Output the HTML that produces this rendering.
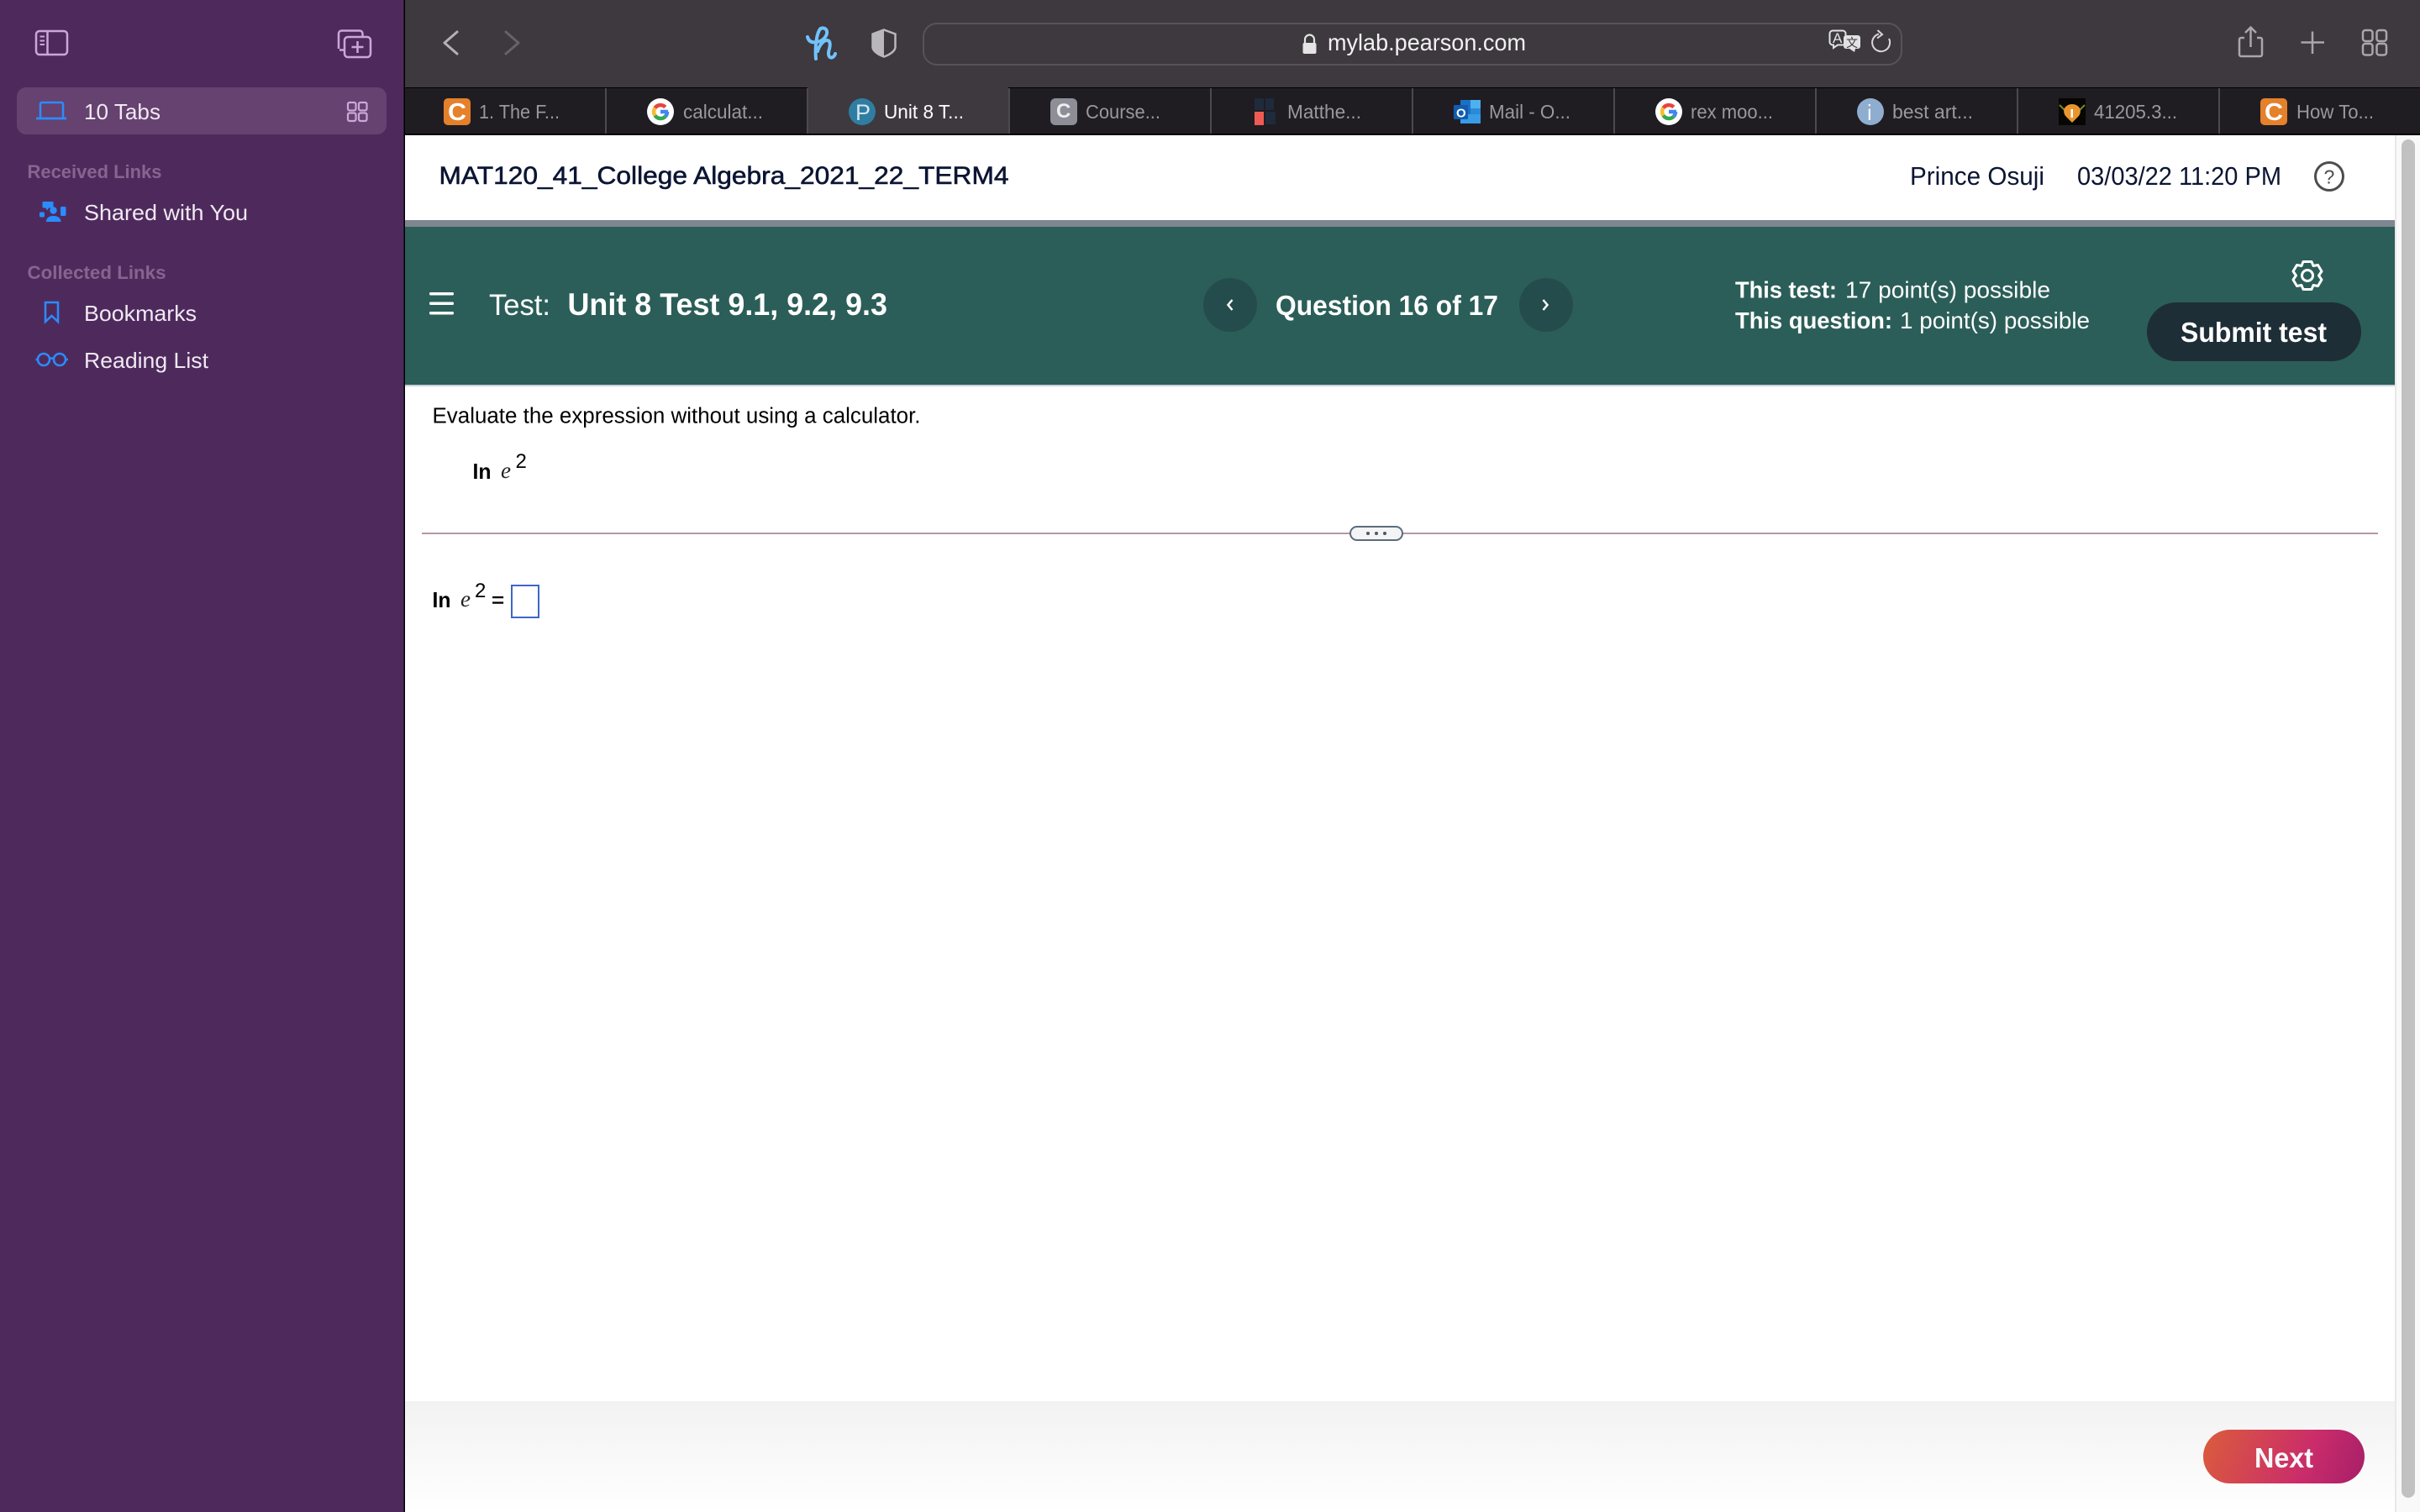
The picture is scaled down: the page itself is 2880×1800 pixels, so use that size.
<!DOCTYPE html>
<html lang="en">
<head>
<meta charset="utf-8">
<title>mylab.pearson.com</title>
<style>
html,body{margin:0;padding:0;width:2880px;height:1800px;overflow:hidden;background:#fff}
svg{display:block}
text{font-family:"Liberation Sans",Arial,sans-serif}
.side{font-size:26px;fill:#f0e9f2}
.head{font-size:22px;font-weight:bold;fill:#85658f}
.tab{font-size:23px;fill:#9a989d}
.ic{fill:none;stroke:#c9a8d8;stroke-width:2.5}
.bl{fill:none;stroke:#2b8cff;stroke-width:2.5}
.tb{fill:none;stroke:#a9a6ac;stroke-width:2.5}
.w{fill:#fff}
.d{fill:#0b1533}
.m{fill:#000}
</style>
</head>
<body>
<svg width="2880" height="1800" viewBox="0 0 2880 1800" xmlns="http://www.w3.org/2000/svg">
<defs>
  <g id="gg">
    <circle cx="16" cy="16" r="16" fill="#fff"/>
    <g fill="none" stroke-width="4.5">
      <path d="M9.5 11.5A8 8 0 0 1 21.8 10.5" stroke="#e8453c"/>
      <path d="M9.5 11.5A8 8 0 0 0 9.5 20.5" stroke="#f9bb2d"/>
      <path d="M9.5 20.5A8 8 0 0 0 22 21.5" stroke="#34a853"/>
      <path d="M25 16H16M24 16A8 8 0 0 1 22 21.5" stroke="#4285f4"/>
    </g>
  </g>
</defs>

<!-- sidebar -->
<rect x="0" y="0" width="480.5" height="1800" fill="#4e2a5c"/>
<rect x="480.5" y="0" width="1.5" height="1800" fill="#000"/>
<rect x="20" y="104" width="440" height="56" rx="11" fill="#664270"/>

<g class="ic">
  <rect x="43" y="37" width="37" height="28" rx="4"/>
  <path d="M56.5 37V65"/>
  <path d="M47.5 43.5H53M47.5 48.5H53M47.5 53H53" stroke-width="2"/>
  <path d="M403 58V40a3.500 3.500 0 0 1 3.500-3.500H428a3.500 3.500 0 0 1 3.500 3.500v4"/>
  <path d="M404 59.500H410"/>
  <rect x="410" y="44" width="31" height="24" rx="4"/>
  <path d="M425.5 49V63M418.5 56H432.5"/>
  <g stroke-width="2.2">
    <rect x="414" y="122" width="9.5" height="9.5" rx="2"/>
    <rect x="427" y="122" width="9.5" height="9.5" rx="2"/>
    <rect x="414" y="134.500" width="9.5" height="9.500" rx="2"/>
    <rect x="427" y="134.500" width="9.500" height="9.500" rx="2"/>
  </g>
</g>

<g class="bl">
  <path d="M48 140V124a2 2 0 0 1 2-2H73a2 2 0 0 1 2 2V140"/>
  <path d="M43 141H79" stroke-width="2.800"/>
  <path d="M54 360H69V383L61.500 376L54 383Z"/>
  <circle cx="52" cy="428" r="7"/>
  <circle cx="71" cy="428" r="7"/>
  <path d="M59 427.500C61 426 62 426 64 427.500M42.500 428H45M78 428H81"/>
</g>
<g fill="#2b8cff">
  <path d="M52 240H62a1.500 1.500 0 0 1 1.500 1.500V246a1.500 1.500 0 0 1-1.500 1.500H58L56 250.500L54.500 247.500H52a1.500 1.500 0 0 1-1.500-1.500V241.500A1.500 1.500 0 0 1 52 240Z"/>
  <circle cx="63.500" cy="250.500" r="4.200"/>
  <path d="M55 264C55 259 59 257 63.500 257S72.500 259 72.500 264Z"/>
  <rect x="72" y="246" width="6.500" height="11" rx="1.500"/>
  <rect x="47" y="252.500" width="6" height="6" rx="1.500"/>
</g>

<text class="side" x="100" y="142" textLength="91" lengthAdjust="spacingAndGlyphs">10 Tabs</text>
<text class="head" x="32.500" y="212" textLength="160" lengthAdjust="spacingAndGlyphs">Received Links</text>
<text class="side" x="100" y="262" textLength="195" lengthAdjust="spacingAndGlyphs">Shared with You</text>
<text class="head" x="32.500" y="332" textLength="165" lengthAdjust="spacingAndGlyphs">Collected Links</text>
<text class="side" x="100" y="382" textLength="134" lengthAdjust="spacingAndGlyphs">Bookmarks</text>
<text class="side" x="100" y="438" textLength="148" lengthAdjust="spacingAndGlyphs">Reading List</text>

<!-- toolbar -->
<rect x="482" y="0" width="2398" height="104" fill="#3d393e"/>
<rect x="482" y="104" width="2398" height="1.500" fill="#000"/>
<rect x="482" y="105" width="2398" height="54" fill="#1f1d22"/>
<rect x="482" y="159" width="2398" height="2" fill="#000"/>
<rect x="961" y="104" width="239" height="55" fill="#3d393e"/>
<g fill="#4c494f">
  <rect x="720" y="105" width="2" height="54"/>
  <rect x="960" y="105" width="2" height="54"/>
  <rect x="1200" y="105" width="2" height="54"/>
  <rect x="1440" y="105" width="2" height="54"/>
  <rect x="1680" y="105" width="2" height="54"/>
  <rect x="1920" y="105" width="2" height="54"/>
  <rect x="2160" y="105" width="2" height="54"/>
  <rect x="2400" y="105" width="2" height="54"/>
  <rect x="2640" y="105" width="2" height="54"/>
</g>

<path d="M544 38L529 51L544 64" fill="none" stroke="#b4b1b6" stroke-width="3" stroke-linecap="round" stroke-linejoin="round"/>
<path d="M602 38L617 51L602 64" fill="none" stroke="#666368" stroke-width="3" stroke-linecap="round" stroke-linejoin="round"/>

<path d="M961 44C962.500 50 967 51 972 50C980 49 985 42 984 37C983 33 977 32 975 36C971 43 970 60 971 70M973 61C975 54 980 48 984 48C989 48 988 55 986.500 60C985 66 987 69 990 68.500C992 68 993.500 66 994 64" fill="none" stroke="#72c2fb" stroke-width="4" stroke-linecap="round" stroke-linejoin="round"/>

<path d="M1052 35.500L1065.500 40.500V56C1065.500 61 1058 65.500 1052 67.500C1046 65.500 1038.500 61 1038.500 56V40.500Z" fill="none" stroke="#bab7bc" stroke-width="2.500"/>
<path d="M1052 35.500V67.500C1046 65.500 1038.500 61 1038.500 56V40.500Z" fill="#bab7bc"/>

<rect x="1099" y="28" width="1164" height="49" rx="16" fill="none" stroke="#56535a" stroke-width="2"/>

<rect x="1550.500" y="51" width="16" height="13" rx="2" fill="#e4e4e4"/>
<path d="M1553 52V47a5.500 5.500 0 0 1 11 0V52" fill="none" stroke="#e4e4e4" stroke-width="2.200"/>
<text x="1580" y="60" font-size="28" fill="#f2f1f2" textLength="236" lengthAdjust="spacingAndGlyphs">mylab.pearson.com</text>

<path d="M2181 36.500H2193a3.500 3.500 0 0 1 3.500 3.500V50a3.500 3.500 0 0 1-3.500 3.500H2187L2182 57V53.500H2181a3.500 3.500 0 0 1-3.500-3.500V40a3.500 3.500 0 0 1 3.500-3.500Z" fill="#3d393e" stroke="#e2e1e3" stroke-width="2"/>
<text x="2181" y="51" font-size="17" fill="#e2e1e3">A</text>
<path d="M2197 42H2211a3 3 0 0 1 3 3V55a3 3 0 0 1-3 3H2208L2207 62L2201 58H2197a3 3 0 0 1-3-3V45a3 3 0 0 1 3-3Z" fill="#e2e1e3"/>
<text x="2197" y="56" font-size="14" fill="#3d393e" style="font-family:'Liberation Sans','Noto Sans CJK SC',sans-serif">文</text>
<path d="M2236 40.500A10.500 10.500 0 1 0 2248 46" fill="none" stroke="#d8d7d9" stroke-width="2"/>
<path d="M2234.500 36L2240 41L2234 45.500" fill="none" stroke="#d8d7d9" stroke-width="2"/>

<g class="tb">
  <path d="M2671 45H2667a2 2 0 0 0-2 2V65a2 2 0 0 0 2 2H2690a2 2 0 0 0 2-2V47a2 2 0 0 0-2-2H2686"/>
  <path d="M2678.500 56V33M2672 39L2678.500 32.500L2685 39"/>
  <path d="M2752 37.500V64M2738.500 50.500H2766"/>
  <rect x="2812" y="36" width="11.500" height="13" rx="3"/>
  <rect x="2828.500" y="36" width="11.500" height="13" rx="3"/>
  <rect x="2812" y="52" width="11.500" height="13.500" rx="3"/>
  <rect x="2828.500" y="52" width="11.500" height="13.500" rx="3"/>
</g>

<!-- favicons -->
<rect x="528" y="117" width="32" height="32" rx="5" fill="#e5802b"/>
<text x="533" y="143" font-size="29" font-weight="bold" fill="#fff" textLength="22" lengthAdjust="spacingAndGlyphs">C</text>
<use href="#gg" x="770" y="117"/>
<circle cx="1026" cy="133" r="16" fill="#2f7ea2"/>
<text x="1018" y="143" font-size="27" fill="#d5e6ee">P</text>
<rect x="1250" y="117" width="32" height="32" rx="6" fill="#8e8e98"/>
<text x="1257" y="140" font-size="24" font-weight="bold" fill="#eee">C</text>
<g>
  <rect x="1493" y="117" width="11" height="14" fill="#1f2a3c"/>
  <rect x="1506" y="117" width="10" height="14" fill="#1f2a3c"/>
  <rect x="1493" y="133" width="11" height="16" fill="#ef5b52"/>
  <rect x="1506" y="133" width="12" height="15" fill="#1f2a3c"/>
</g>
<g>
  <rect x="1738" y="119" width="24" height="28" fill="#1d6fc4"/>
  <rect x="1750" y="119" width="12" height="10" fill="#4fb0ee"/>
  <rect x="1750" y="129" width="12" height="9" fill="#2a8ad8"/>
  <path d="M1738 136L1762 136V147H1738Z" fill="#3a9be6"/>
  <rect x="1730" y="125" width="17" height="17" rx="1" fill="#0f5cb0"/>
  <text x="1733" y="139.500" font-size="15" font-weight="bold" fill="#fff">O</text>
</g>
<use href="#gg" x="1970" y="117"/>
<circle cx="2226" cy="133" r="16" fill="#8fadcf"/>
<text x="2222" y="143" font-size="26" fill="#f2f5f9">i</text>
<rect x="2450" y="117" width="32" height="32" fill="#060603"/>
<path d="M2451 125L2457 131M2481 125L2475 131" stroke="#7a8a20" stroke-width="2"/>
<path d="M2466 146L2458 138C2453 130 2459 124 2466 124S2479 130 2474 138Z" fill="#e9952f"/>
<rect x="2464.500" y="130" width="2.500" height="10" fill="#fff"/>
<rect x="2690" y="117" width="32" height="32" rx="5" fill="#e5802b"/>
<text x="2695" y="143" font-size="29" font-weight="bold" fill="#fff" textLength="22" lengthAdjust="spacingAndGlyphs">C</text>

<!-- tab labels -->
<text class="tab" x="570" y="141" textLength="96" lengthAdjust="spacingAndGlyphs">1. The F...</text>
<text class="tab" x="813" y="141" textLength="95" lengthAdjust="spacingAndGlyphs">calculat...</text>
<text class="tab" x="1052" y="141" textLength="95" lengthAdjust="spacingAndGlyphs" style="fill:#fff">Unit 8 T...</text>
<text class="tab" x="1292" y="141" textLength="89" lengthAdjust="spacingAndGlyphs">Course...</text>
<text class="tab" x="1532" y="141" textLength="88" lengthAdjust="spacingAndGlyphs">Matthe...</text>
<text class="tab" x="1772" y="141" textLength="97" lengthAdjust="spacingAndGlyphs">Mail - O...</text>
<text class="tab" x="2012" y="141" textLength="98" lengthAdjust="spacingAndGlyphs">rex moo...</text>
<text class="tab" x="2252" y="141" textLength="96" lengthAdjust="spacingAndGlyphs">best art...</text>
<text class="tab" x="2492" y="141" textLength="99" lengthAdjust="spacingAndGlyphs">41205.3...</text>
<text class="tab" x="2733" y="141" textLength="92" lengthAdjust="spacingAndGlyphs">How To...</text>

<!-- page header -->
<rect x="482" y="161" width="2368" height="101" fill="#fff"/>
<text class="d" x="522.500" y="219" font-size="30" stroke="#0b1533" stroke-width="0.600" textLength="678" lengthAdjust="spacingAndGlyphs">MAT120_41_College Algebra_2021_22_TERM4</text>
<text class="d" x="2273" y="220" font-size="31" textLength="160" lengthAdjust="spacingAndGlyphs">Prince Osuji</text>
<text class="d" x="2472" y="220" font-size="31" textLength="243" lengthAdjust="spacingAndGlyphs">03/03/22 11:20 PM</text>
<circle cx="2772" cy="210" r="16.500" fill="none" stroke="#4d4d4d" stroke-width="3"/>
<text x="2765.500" y="218.500" font-size="23" fill="#4d4d4d">?</text>

<rect x="482" y="262" width="2368" height="8" fill="#7f868f"/>
<rect x="482" y="270" width="2368" height="188" fill="#2b5e58"/>
<rect x="482" y="458" width="2368" height="2" fill="#c9d1dc"/>

<g fill="#fff">
  <rect x="511" y="348" width="29" height="3.500" rx="1.500"/>
  <rect x="511" y="359.500" width="29" height="3.500" rx="1.500"/>
  <rect x="511" y="371" width="29" height="3.500" rx="1.500"/>
</g>
<text class="w" x="582" y="375" font-size="35" textLength="73" lengthAdjust="spacingAndGlyphs">Test:</text>
<text class="w" x="675.500" y="375" font-size="37" font-weight="bold" textLength="380.500" lengthAdjust="spacingAndGlyphs">Unit 8 Test 9.1, 9.2, 9.3</text>

<circle cx="1464" cy="363" r="32" fill="#254c4c"/>
<circle cx="1840" cy="363" r="32" fill="#254c4c"/>
<path d="M1466.500 357L1461.500 363L1466.500 369" fill="none" stroke="#fff" stroke-width="2.500"/>
<path d="M1836.500 357L1841.500 363L1836.500 369" fill="none" stroke="#fff" stroke-width="2.500"/>
<text class="w" x="1518" y="375" font-size="33" font-weight="bold" textLength="265" lengthAdjust="spacingAndGlyphs">Question 16 of 17</text>

<text class="w" x="2065" y="354.500" font-size="28" font-weight="bold" textLength="121" lengthAdjust="spacingAndGlyphs">This test:</text>
<text class="w" x="2196" y="354.500" font-size="28" textLength="244" lengthAdjust="spacingAndGlyphs">17 point(s) possible</text>
<text class="w" x="2065" y="391" font-size="28" font-weight="bold" textLength="187" lengthAdjust="spacingAndGlyphs">This question:</text>
<text class="w" x="2261" y="391" font-size="28" textLength="226" lengthAdjust="spacingAndGlyphs">1 point(s) possible</text>

<path d="M2741 311.500H2751L2753 316.500L2758.500 315.500L2763 323L2759.500 328L2763 333L2758.500 340.500L2753 339.500L2751 344.500H2741L2739 339.500L2733.500 340.500L2729 333L2732.500 328L2729 323L2733.500 315.500L2739 316.500Z" fill="none" stroke="#fff" stroke-width="3" stroke-linejoin="round"/>
<circle cx="2746" cy="328" r="6.500" fill="none" stroke="#fff" stroke-width="3"/>

<rect x="2555" y="360" width="255" height="70" rx="35" fill="#1e2e36"/>
<text class="w" x="2595" y="407" font-size="33" font-weight="bold" textLength="174" lengthAdjust="spacingAndGlyphs">Submit test</text>

<!-- question -->
<text class="m" x="514.500" y="503.500" font-size="25.500" textLength="581" lengthAdjust="spacingAndGlyphs">Evaluate the expression without using a calculator.</text>
<text class="m" x="562.500" y="570" font-size="26" font-weight="bold" textLength="22" lengthAdjust="spacingAndGlyphs">In</text>
<text x="596" y="569" font-size="27" font-style="italic" style="font-family:'Liberation Serif',serif" fill="#222">e</text>
<text class="m" x="613.500" y="557" font-size="24">2</text>

<rect x="502" y="634" width="2328" height="2" fill="#b496a6"/>
<rect x="1607" y="627" width="62" height="16" rx="8" fill="#f3f4f6" stroke="#5d6b7a" stroke-width="2"/>
<g fill="#4f5560">
  <circle cx="1628" cy="635" r="2"/>
  <circle cx="1638" cy="635" r="2"/>
  <circle cx="1648" cy="635" r="2"/>
</g>

<text class="m" x="514.500" y="723" font-size="26" font-weight="bold" textLength="22" lengthAdjust="spacingAndGlyphs">In</text>
<text x="548" y="722" font-size="27" font-style="italic" style="font-family:'Liberation Serif',serif" fill="#222">e</text>
<text class="m" x="565" y="711" font-size="24">2</text>
<text class="m" x="585" y="723" font-size="26" stroke="#000" stroke-width="0.400">=</text>
<rect x="609" y="697" width="32" height="38" fill="#fff" stroke="#3e66c6" stroke-width="2"/>

<!-- footer -->
<linearGradient id="fg" x1="0" y1="0" x2="0" y2="1">
  <stop offset="0" stop-color="#f2f2f2"/>
  <stop offset="1" stop-color="#ffffff"/>
</linearGradient>
<rect x="482" y="1668" width="2368" height="132" fill="url(#fg)"/>
<linearGradient id="nb" gradientUnits="userSpaceOnUse" x1="2630" y1="1700" x2="2806" y2="1768">
  <stop offset="0" stop-color="#da5a3e"/>
  <stop offset="0.650" stop-color="#ca2c6a"/>
  <stop offset="1" stop-color="#a92069"/>
</linearGradient>
<rect x="2622" y="1702" width="192" height="64" rx="32" fill="url(#nb)"/>
<text x="2683" y="1747" font-size="33" font-weight="bold" fill="#f8f9fc" textLength="70" lengthAdjust="spacingAndGlyphs">Next</text>

<!-- scrollbar -->
<rect x="2850" y="161" width="30" height="1639" fill="#f9f9f9"/>
<rect x="2850" y="161" width="2" height="1639" fill="#e8e8e8"/>
<rect x="2858" y="166" width="16" height="1617" rx="8" fill="#c1c1c1"/>
</svg>
</body>
</html>
